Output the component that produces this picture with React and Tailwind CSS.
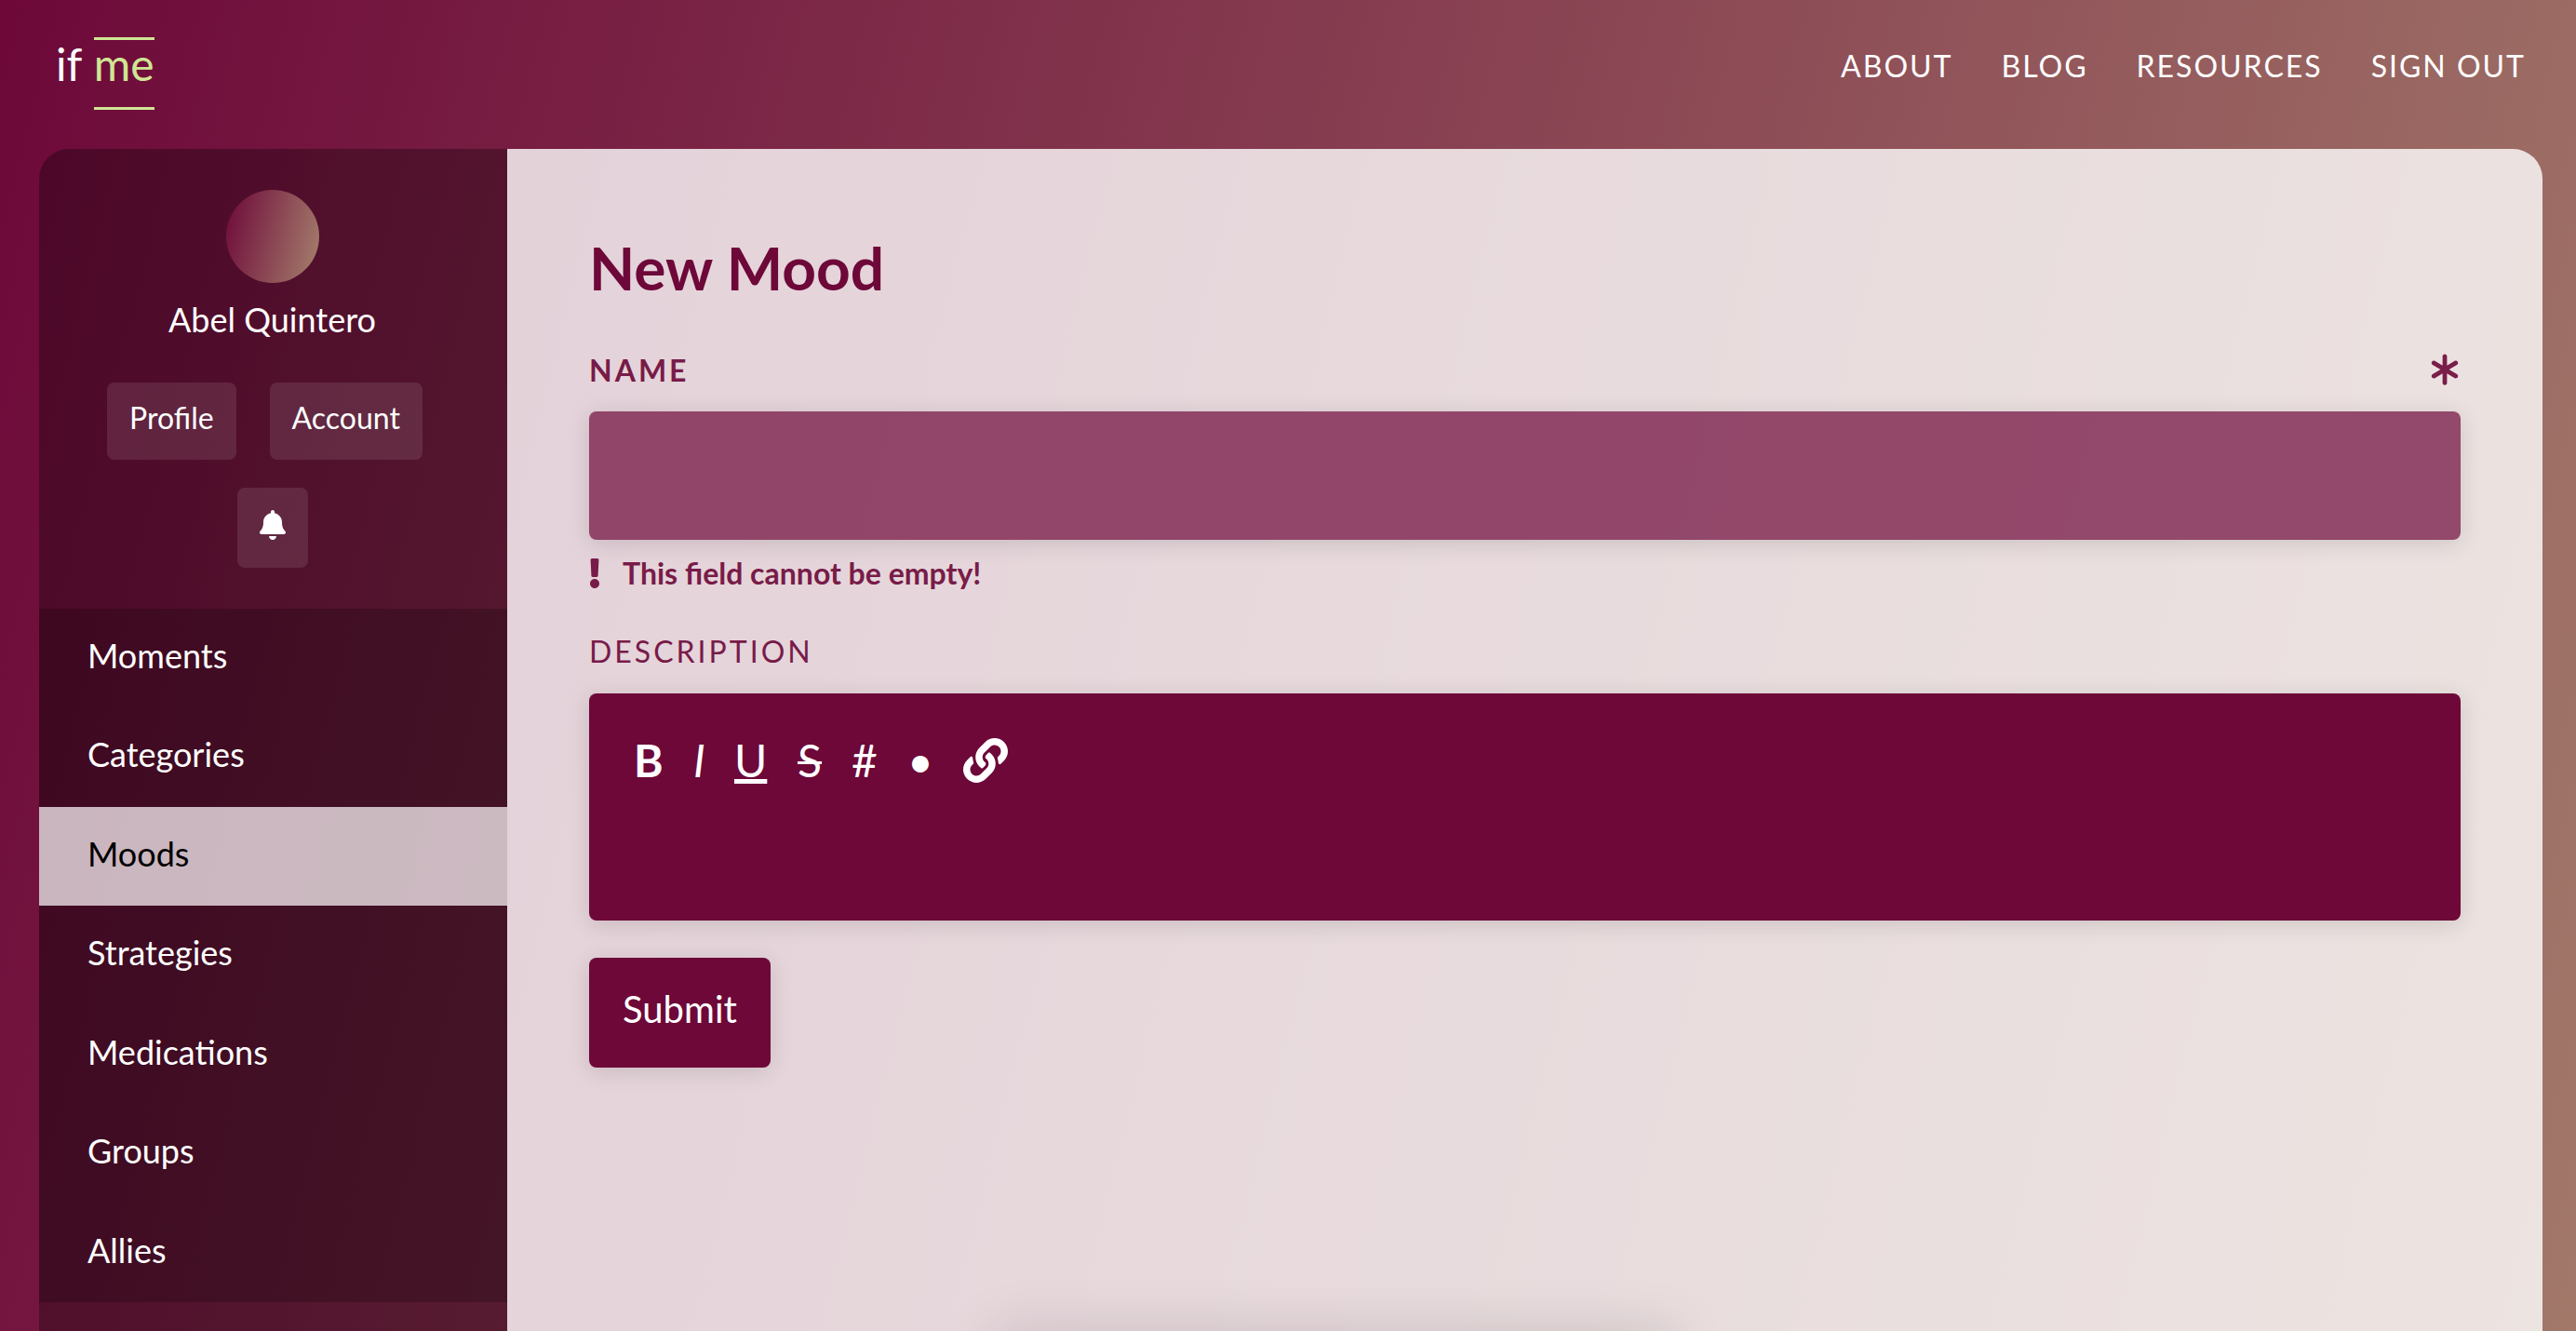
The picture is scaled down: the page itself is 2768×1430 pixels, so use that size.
import React from "react";
import { FaBell, FaLink, FaExclamation } from "react-icons/fa";
import { FaAsterisk } from "react-icons/fa6";

const topLinks = ["About", "Blog", "Resources", "Sign out"];
const sideLinks = ["Moments", "Categories", "Moods", "Strategies", "Medications", "Groups", "Allies"];

const pill = "flex items-start justify-center rounded-lg bg-white/10 px-6 text-[32px] leading-[76px] h-[83px]";
const fieldShadow = "shadow-[0_4px_24px_rgba(0,0,0,0.13)]";

function Header() {
  return (
    <header className="flex h-40 items-start justify-between pl-15 pr-[54px]">
      <a href="#home" className="mt-10 flex gap-px text-5xl text-white">
        <span className="leading-[58px]">if&nbsp;</span>
        <span className="h-[78px] border-y-3 border-[#d0e694] leading-[52px] text-[#d0e694]">me</span>
      </a>
      <nav className="mt-[47px] flex gap-[52px] text-[32px] leading-12 tracking-[2px] text-white uppercase">
        {topLinks.map((t) => (
          <a key={t} href="#top">{t}</a>
        ))}
      </nav>
    </header>
  );
}

function Sidebar() {
  return (
    <aside className="w-[503px] shrink-0 bg-black/30 text-white">
      <div className="flex h-[494px] flex-col items-center pt-11 pr-0.5">
        <div className="size-25 rounded-full bg-[linear-gradient(104deg,#6d0839_0%,#a6816d_100%)]" />
        <p className="mt-[15px] text-4xl leading-12">Abel Quintero</p>
        <div className="mt-11 flex gap-9 pr-4">
          <a href="#profile" className={pill}>Profile</a>
          <a href="#account" className={pill}>Account</a>
        </div>
        <button type="button" aria-label="Notifications" className="mt-[30px] flex h-[86px] w-19 justify-center rounded-lg bg-white/10 pt-6">
          <FaBell className="size-8" />
        </button>
      </div>
      <nav className="flex h-[745px] flex-col text-4xl leading-[100px]">
        {sideLinks.map((t) => (
          <a
            key={t}
            href="#side"
            aria-current={t === "Moods" ? "page" : undefined}
            className={t === "Moods" ? "flex-1 bg-white/70 pl-13 text-black" : "flex-1 bg-black/20 pl-13"}
          >
            {t}
          </a>
        ))}
      </nav>
    </aside>
  );
}

function Toolbar() {
  return (
    <div className="flex h-12 items-center text-5xl leading-12 text-white">
      <button type="button" aria-label="Bold" className="w-16 text-left font-bold">B</button>
      <button type="button" aria-label="Italic" className="w-11 text-left italic">I</button>
      <button type="button" aria-label="Underline" className="w-[68px] text-left underline decoration-[5px] underline-offset-2">U</button>
      <button type="button" aria-label="Strikethrough" className="w-[58px] text-left line-through decoration-[3px]">S</button>
      <button type="button" aria-label="Heading" className="w-15 text-left">#</button>
      <button type="button" aria-label="List" className="w-15 text-left">•</button>
      <button type="button" aria-label="Link" className="text-left"><FaLink className="size-12" /></button>
    </div>
  );
}

export default function App() {
  return (
    <div className="flex h-screen flex-col overflow-hidden bg-[linear-gradient(104deg,#6d0839_0%,#a6816d_108%)] font-[Lato,sans-serif]">
      <Header />
      <div className="mr-9 ml-[42px] flex min-h-0 grow overflow-hidden rounded-t-[32px]">
        <Sidebar />
        <main className="relative grow bg-white/80 px-22 pt-[93px] text-[#6d0839]">
          <h1 className="text-[64px] leading-[70px] font-bold">New Mood</h1>
          <form>
            <div className="mt-[51px] flex h-12 items-start justify-between opacity-90">
              <label htmlFor="name" className="text-[32px] leading-12 font-bold tracking-[3px] uppercase">Name</label>
              <FaAsterisk className="-mr-0.5 mt-1 size-[38px]" />
            </div>
            <input id="name" type="text" className={`mt-5 block h-[138px] w-full rounded-lg bg-[#6d0839]/70 px-6 text-4xl text-white ${fieldShadow}`} />
            <p className="mt-3 flex h-12 items-center gap-6 text-[32px] font-bold opacity-90">
              <FaExclamation className="h-8 w-3" />
              This field cannot be empty!
            </p>
            <label htmlFor="description" className="mt-9 block text-[32px] leading-12 tracking-[3px] uppercase opacity-90">Description</label>
            <div className={`mt-[21px] h-[244px] rounded-lg bg-[#6d0839] px-12 pt-12 ${fieldShadow}`}>
              <Toolbar />
              <textarea id="description" className="mt-4 block h-24 w-full resize-none bg-transparent text-4xl text-white outline-none" />
            </div>
            <button type="submit" className={`mt-10 block h-[118px] rounded-lg bg-[#6d0839] px-9 pb-2 text-[40px] text-white ${fieldShadow}`}>
              Submit
            </button>
          </form>
          <div className="absolute top-full left-[521px] h-20 w-[735px] shadow-[0_0_60px_rgba(0,0,0,0.13)]" />
        </main>
      </div>
    </div>
  );
}
